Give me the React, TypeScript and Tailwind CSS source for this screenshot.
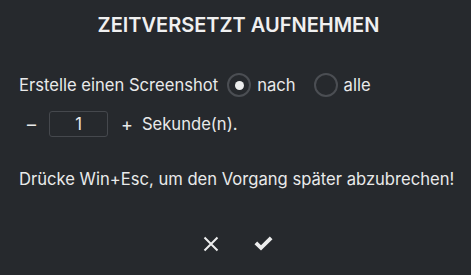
import { useState } from "react";

function Radio({ checked, label, onClick }: { checked: boolean; label: string; onClick: () => void }) {
  return (
    <button onClick={onClick} className="flex items-center gap-[6px]">
      <span className="flex size-[24px] items-center justify-center rounded-full border-2 border-[#4b4e53]">
        {checked && <span className="size-[9px] rounded-full bg-[#eceded]" />}
      </span>
      <span>{label}</span>
    </button>
  );
}

export default function App() {
  const [mode, setMode] = useState<"nach" | "alle">("nach");
  const [seconds, setSeconds] = useState(1);

  return (
    <div
      className="flex h-[275px] w-[471px] flex-col bg-[#26292d] text-[16.6px] text-[#e9eaea]"
      style={{ fontFamily: "Inter, 'Noto Sans', sans-serif" }}
    >
      <h1 className="pt-[10px] pl-[6px] text-center text-[20px] font-semibold text-[#f0f0f0]">
        ZEITVERSETZT AUFNEHMEN
      </h1>

      <div className="mt-[33px] flex items-center pl-[19px]">
        <span className="mr-[9px]">Erstelle einen Screenshot</span>
        <Radio checked={mode === "nach"} label="nach" onClick={() => setMode("nach")} />
        <span className="w-[18px]" />
        <Radio checked={mode === "alle"} label="alle" onClick={() => setMode("alle")} />
      </div>

      <div className="mt-[13px] flex items-center pl-[27px]">
        <button className="text-[18px]" onClick={() => setSeconds((s) => Math.max(0, s - 1))}>
          –
        </button>
        <div className="ml-[13px] flex h-[26px] w-[59px] items-center justify-center rounded-[3px] border border-[#45484d]">
          {seconds}
        </div>
        <button className="ml-[13px] text-[18px]" onClick={() => setSeconds((s) => s + 1)}>
          +
        </button>
        <span className="ml-[9px]">Sekunde(n).</span>
      </div>

      <p className="mt-[29px] pl-[19px]">Drücke Win+Esc, um den Vorgang später abzubrechen!</p>

      <div className="mt-[44px] flex items-center justify-center gap-[35px] pl-[5px]">
        <button aria-label="Abbrechen">
          <svg width="16" height="16" viewBox="0 0 16 16" fill="none" stroke="#eceded" strokeWidth="2">
            <path d="M1.5 1.5L14.5 14.5M14.5 1.5L1.5 14.5" />
          </svg>
        </button>
        <button aria-label="OK">
          <svg width="19" height="15" viewBox="0 0 19 15" fill="#eceded">
            <path d="M0.5 8.2L3.2 5.5L7 9.2L15.8 0.5L18.5 3.2L7 14.6Z" />
          </svg>
        </button>
      </div>
    </div>
  );
}
